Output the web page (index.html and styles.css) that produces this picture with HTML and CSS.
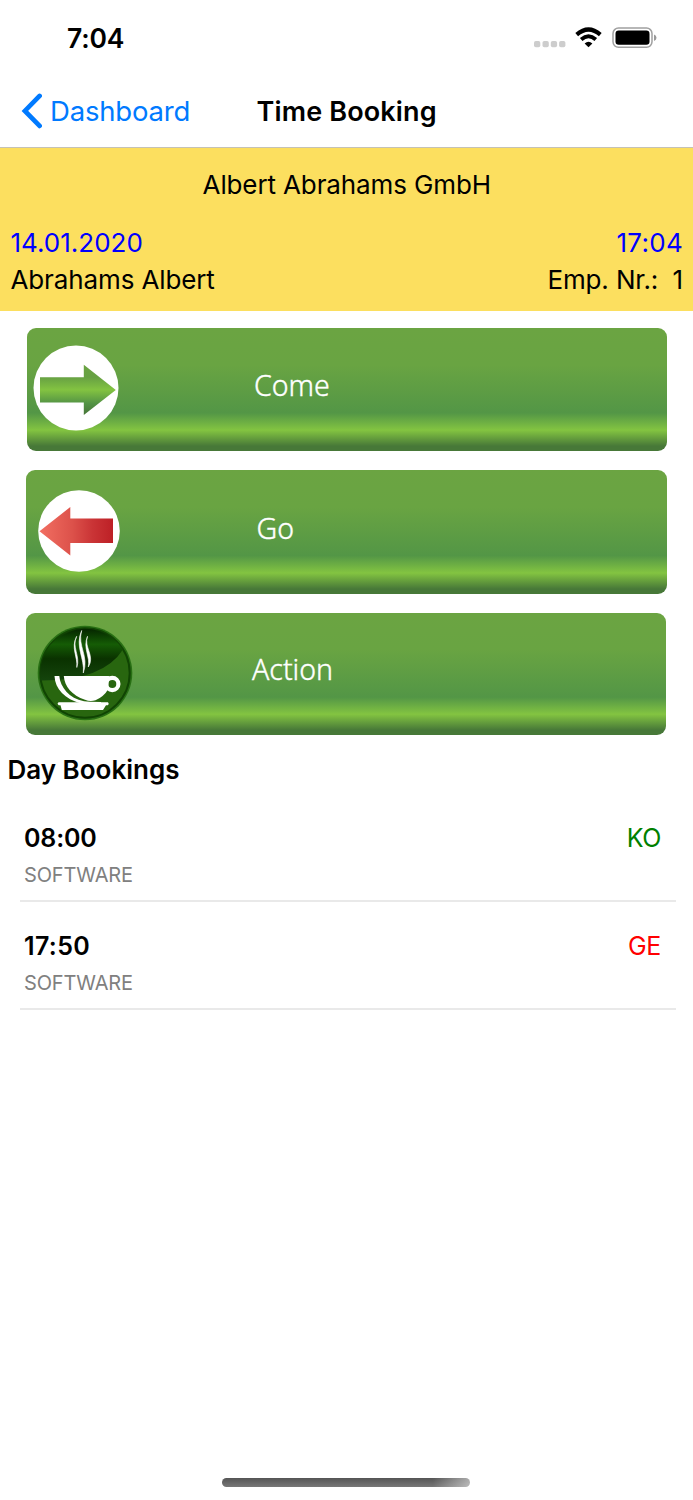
FILE: index.html
```
<!DOCTYPE html>
<html lang="en">
<head>
<meta charset="utf-8">
<title>Time Booking</title>
<link rel="stylesheet" href="styles.css">
</head>
<body>
<div class="screen">
  <div class="status-bar">
    <span class="clock">7:04</span>
    <div class="status-icons">
      <svg class="signal" viewBox="0 0 32 8" width="32" height="8" fill="#cdcdcd"><rect x="0" y="1" width="6.3" height="6.3" rx="1.8"/><rect x="8.5" y="1" width="6.3" height="6.3" rx="1.8"/><rect x="16.8" y="1" width="6.3" height="6.3" rx="1.8"/><rect x="25.1" y="1" width="6.3" height="6.3" rx="1.8"/></svg>
      <svg class="wifi" viewBox="0 0 27 21" width="27" height="21" fill="none" stroke="#000"><path d="M1.7 7.6Q13.5-2.6 25.3 7.6" stroke-width="4.2"/><path d="M6.2 12.4Q13.5 6.2 20.8 12.4" stroke-width="4"/><path d="M13.5 20.3L9.6 16.5Q13.5 13 17.4 16.5Z" fill="#000" stroke="none"/></svg>
      <svg class="battery" viewBox="0 0 45 22" width="45" height="22"><rect x="1" y="1" width="39" height="19.3" rx="5.5" fill="#fff" stroke="#a0a0a0" stroke-width="1.5"/><rect x="3.5" y="3.6" width="34" height="14.2" rx="3.2"/><path d="M42 7.4Q44.5 8.4 44.5 10.7T42 14Z" fill="#999"/></svg>
    </div>
  </div>
  <nav class="nav-bar">
    <a class="back"><svg viewBox="0 0 22 36" width="22" height="36" fill="none" stroke="#007aff" stroke-width="4.7" stroke-linecap="round" stroke-linejoin="miter"><path d="M19.6 2.9L4.9 17.9L19.6 32.9"/></svg><span>Dashboard</span></a>
    <h1 class="title">Time Booking</h1>
  </nav>
  <header class="employee">
    <div class="company"><span>Albert Abrahams GmbH</span></div>
    <div class="row blue"><span class="date">14.01.2020</span><span class="time">17:04</span></div>
    <div class="row"><span class="name">Abrahams Albert</span><span class="number">Emp. Nr.:&nbsp; 1</span></div>
  </header>
  <main>
    <div class="actions">
      <button class="action come">
        <svg viewBox="0 0 86 86" width="86" height="86">
          <defs><linearGradient id="green" x1="0" y1="0" x2="0" y2="1"><stop offset="0" stop-color="#6aa342"/><stop offset=".25" stop-color="#67a143"/><stop offset=".5" stop-color="#83c341"/><stop offset=".77" stop-color="#539345"/><stop offset="1" stop-color="#477538"/></linearGradient></defs>
          <circle cx="43" cy="43" r="42.5" fill="#fff"/><path d="M7 32.3H50.8V19.7L82.8 44.9L50.8 70V57.5H7Z" fill="url(#green)"/>
        </svg>
        <span>Come</span>
      </button>
      <button class="action go">
        <svg viewBox="0 0 82 82" width="82" height="82">
          <defs><linearGradient id="red"><stop offset="0" stop-color="#f26f62"/><stop offset=".45" stop-color="#dc514a"/><stop offset=".72" stop-color="#ca3436"/><stop offset="1" stop-color="#bd2026"/></linearGradient></defs>
          <circle cx="41" cy="41" r="40.8" fill="#fff"/><path d="M1.5 41.3L32.3 17V28.4H75V53H32.3V65.5Z" fill="url(#red)"/>
        </svg>
        <span>Go</span>
      </button>
      <button class="action pause">
        <svg viewBox="0 0 96 96" width="96" height="96">
          <defs><linearGradient id="gloss" x1="0" y1="0" x2="0" y2="1"><stop offset="0" stop-color="#052500"/><stop offset=".13" stop-color="#0b3d02"/><stop offset=".3" stop-color="#155c05"/><stop offset=".58" stop-color="#0a3200"/><stop offset="1" stop-color="#14440c"/></linearGradient></defs>
          <circle cx="48" cy="48" r="47.3" fill="#286f14"/><circle cx="48" cy="48" r="44.7" fill="#28660f" stroke="#104403" stroke-width="2"/>
          <path d="M3.6 55.5A45 45 0 0 1 86 24.5Q66 56 3.6 55.5Z" fill="url(#gloss)"/>
          <circle cx="75.3" cy="59" r="6.1" fill="none" stroke="#fff" stroke-width="4.2"/>
          <g fill="#fff">
            <path d="M17.5 51H22.3C23.3 62 32 73.5 47 76.2Q50 76.6 53 76.7L64 77V78.5H44C28 74 18 64 17.5 51Z"/>
            <path d="M26.8 51H72L71 64.5Q67 71.5 58.5 75.3Q53 77 48 74.7C35 70.5 27.5 61.5 26.8 51Z"/>
            <path d="M21.5 77.2H71L71.8 79L70.8 80.2H69L66 85H24.8L23.5 80.2H21.7L20.5 78.8Z"/>
            <path d="M39.7 11.3C34.3 22 43.8 31 39.8 42.5C41 32 33.5 23 39.7 11.3M44.7 5.5C40 21 52.5 31 46.3 48C48 34 37.5 21 44.7 5.5M50.5 11.3C46.5 22 58.5 31 51.3 42C53.5 32 45.5 23 50.5 11.3" stroke="#fff" stroke-width=".6"/>
          </g>
        </svg>
        <span>Action</span>
      </button>
    </div>
    <section class="bookings">
      <h2><span>Day Bookings</span></h2>
      <ul>
        <li><div><strong class="t1">08:00</strong><b class="in">KO</b></div><small>SOFTWARE</small></li>
        <li><div><strong class="t2">17:50</strong><b class="out">GE</b></div><small>SOFTWARE</small></li>
      </ul>
    </section>
  </main>
  <div class="home-indicator"></div>
</div>
</body>
</html>
```
FILE: styles.css
```
* { box-sizing: border-box; }
body { margin: 0; background: #fff; color: #000; font-family: Inter, "Liberation Sans", sans-serif; }
h1, h2, ul { margin: 0; padding: 0; }
svg { display: block; flex: none; }
.screen { display: flex; flex-direction: column; width: 693px; height: 1500px; }
.status-bar { display: flex; justify-content: space-between; height: 75px; padding: 0 36px 0 67px; }
.clock { padding-top: 21px; font-size: 26.5px; line-height: 34px; font-weight: 600; letter-spacing: -.2px; }
.status-icons { display: flex; align-items: flex-start; padding-top: 27px; }
.signal { margin: 13px 9px 0 0; }
.wifi { margin-right: 10px; }
.nav-bar { display: grid; grid-template-columns: 256.5px 1fr; align-items: center; height: 73px; border-bottom: 1px solid #c5c2b5; }
.back { display: flex; align-items: center; gap: 8px; padding-left: 20px; color: #007aff; font-size: 27.5px; letter-spacing: -.2px; }
.title { font-size: 27px; font-weight: 600; letter-spacing: .15px; }
.employee { height: 163px; padding: 18.5px 10px 0 10.5px; background: #fcdf5f; font-size: 26px; line-height: 36px; letter-spacing: -.12px; }
.company { text-align: center; }
.row { display: flex; justify-content: space-between; height: 37px; }
.blue { margin-top: 22.5px; color: #00f; }
.date { letter-spacing: 0; }
.time { letter-spacing: .3px; }
.actions { display: flex; flex-direction: column; gap: 19px; padding: 16.5px 26px 0; }
.action { display: grid; grid-template-columns: 224px 1fr; align-items: start; width: 641px; height: 123.5px; padding: 0; border: 0; border-radius: 9px; color: #fff; text-align: left; font: 300 28.5px/40px "Noto Sans", sans-serif; -webkit-text-stroke: .4px #fff; background: linear-gradient(#6ba442 0%, #69a442 30%, #539646 69%, #83c441 83%, #477838 96%, #477838 100%); }
.action svg { -webkit-text-stroke: 0; }
.action span { padding-top: 37.5px; }
.come { width: 639.5px; margin-left: 1px; }
.come svg { margin: 17.5px 0 0 5.5px; }
.go svg { margin: 20px 0 0 12px; }
.pause { width: 639.5px; height: 122.5px; }
.pause svg { margin: 12px 0 0 10.5px; }
.come span { padding: 37px 0 0 3px; }
.go span { padding-left: 6.5px; }
.pause span { padding: 36.5px 0 0 2px; }
.bookings h2 { padding: 17px 0 0 7.5px; font-size: 26px; line-height: 36px; font-weight: 600; }
.bookings ul { padding: 5.5px 17px 0 20px; list-style: none; }
.bookings li { height: 108px; padding: 26px 15px 0 4px; border-bottom: 2px solid #e9e9e9; }
.bookings li div { display: flex; justify-content: space-between; font-size: 25px; line-height: 36px; }
.bookings strong { font-weight: 600; }
.bookings b { font-weight: 400; letter-spacing: -.4px; }
.bookings small { display: block; color: #808080; font-size: 20px; line-height: 38px; letter-spacing: -.15px; }
.bookings .t1 { letter-spacing: -.15px; }
.bookings .t2 { letter-spacing: .35px; }
.in { color: #008000; }
.out { color: #f00; }
.home-indicator { width: 248px; height: 9px; margin: auto auto 13px 222px; border-radius: 5px; background: linear-gradient(90deg, transparent 85%, #ffffff80), linear-gradient(#555, #777); }
```
